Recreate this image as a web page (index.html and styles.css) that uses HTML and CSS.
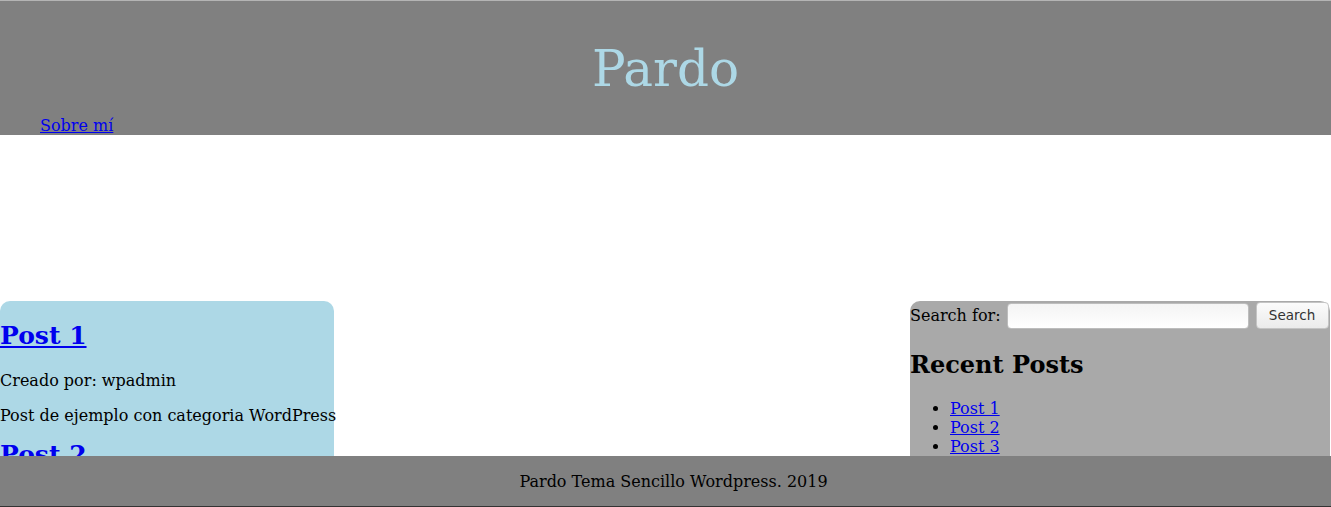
FILE: index.html
```html
<!DOCTYPE html>
<html lang="es">
<head>
<meta charset="utf-8">
<title>Pardo</title>
<link rel="stylesheet" href="styles.css">
</head>
<body>
<header class="site-header">
  <h1 class="site-title">Pardo</h1>
  <nav>
    <ul class="menu">
      <li><a href="#">Sobre mí</a></li>
    </ul>
  </nav>
</header>
<main class="layout">
  <section class="posts">
    <article class="post">
      <h2><a href="#">Post 1</a></h2>
      <p>Creado por: wpadmin</p>
      <p>Post de ejemplo con categoria WordPress</p>
    </article>
    <article class="post">
      <h2><a href="#">Post 2</a></h2>
      <p>Creado por: wpadmin</p>
      <p>Post de ejemplo con categoria WordPress</p>
    </article>
    <article class="post">
      <h2><a href="#">Post 3</a></h2>
      <p>Creado por: wpadmin</p>
      <p>Post de ejemplo con categoria WordPress</p>
    </article>
  </section>
  <aside class="sidebar">
    <form class="search" action="#">
      <label for="s">Search for:</label>
      <input id="s" class="search-input" type="text">
      <button class="search-btn" type="button">Search</button>
    </form>
    <h2>Recent Posts</h2>
    <ul class="recent">
      <li><a href="#">Post 1</a></li>
      <li><a href="#">Post 2</a></li>
      <li><a href="#">Post 3</a></li>
      <li><a href="#">Post 4</a></li>
      <li><a href="#">Post 5</a></li>
    </ul>
  </aside>
</main>
<footer class="site-footer">
  <p>Pardo Tema Sencillo Wordpress. 2019</p>
</footer>
</body>
</html>
```
FILE: styles.css
```css
html, body {
  margin: 0;
  padding: 0;
}
body {
  font-family: "DejaVu Serif", serif;
  font-size: 16px;
  color: #000;
  background: #fff;
}
a {
  color: #0000ee;
}
.site-header {
  background: #808080;
  border-top: 1px solid #b4b4b4;
  padding: 40px 0 0;
}
.site-title {
  margin: 0 0 18px;
  text-align: center;
  font-weight: normal;
  font-size: 50px;
  line-height: 57px;
  color: #add8e6;
}
.menu {
  list-style: none;
  margin: 0;
  padding: 0 0 0 40px;
  line-height: 19px;
}
.layout {
  margin-top: 166px;
  display: flex;
  justify-content: space-between;
  align-items: flex-start;
  padding-right: 1px;
  padding-bottom: 60px;
}
.posts {
  flex: none;
  width: 334px;
  white-space: nowrap;
  background: #add8e6;
  border-radius: 10px;
  display: flow-root;
}
.post h2 {
  font-size: 25px;
  line-height: 29px;
  margin: 20px 0 21px;
}
.post + .post h2 {
  margin-top: 0;
}
.post p {
  margin: 16px 0;
}
.post p:last-child {
  margin-bottom: 15px;
}
.sidebar {
  width: 420px;
  background: #a9a9a9;
  border-radius: 10px;
  display: flex;
  flex-direction: column;
}
.search {
  display: flex;
  align-items: center;
  height: 29px;
}
.search label {
  margin-right: 5px;
}
.search-input {
  width: 242px;
  height: 26px;
  box-sizing: border-box;
  border: 1px solid #bdbdbd;
  border-radius: 4px;
  background: linear-gradient(#f4f4f4, #ffffff);
  margin: 0 7px 0 1px;
  padding: 0 4px;
}
.search-btn {
  width: 73px;
  height: 27px;
  box-sizing: border-box;
  border: 1px solid #c4c4c4;
  border-radius: 4px;
  background: linear-gradient(#fbfbfb, #ebebeb);
  font-family: "DejaVu Sans", sans-serif;
  font-size: 13.5px;
  color: #333;
  padding: 0;
  margin-top: -1px;
}
.sidebar h2 {
  font-size: 24px;
  margin: 20px 0;
}
.recent {
  margin: 0 0 16px;
  padding-left: 40px;
  line-height: 19px;
}
.site-footer {
  position: fixed;
  left: 0;
  right: 0;
  bottom: 0;
  height: 50px;
  background: #808080;
  border-bottom: 1px solid #333;
  display: flex;
  align-items: center;
  justify-content: center;
  padding-left: 16px;
}
.site-footer p {
  margin: 0;
}
```
